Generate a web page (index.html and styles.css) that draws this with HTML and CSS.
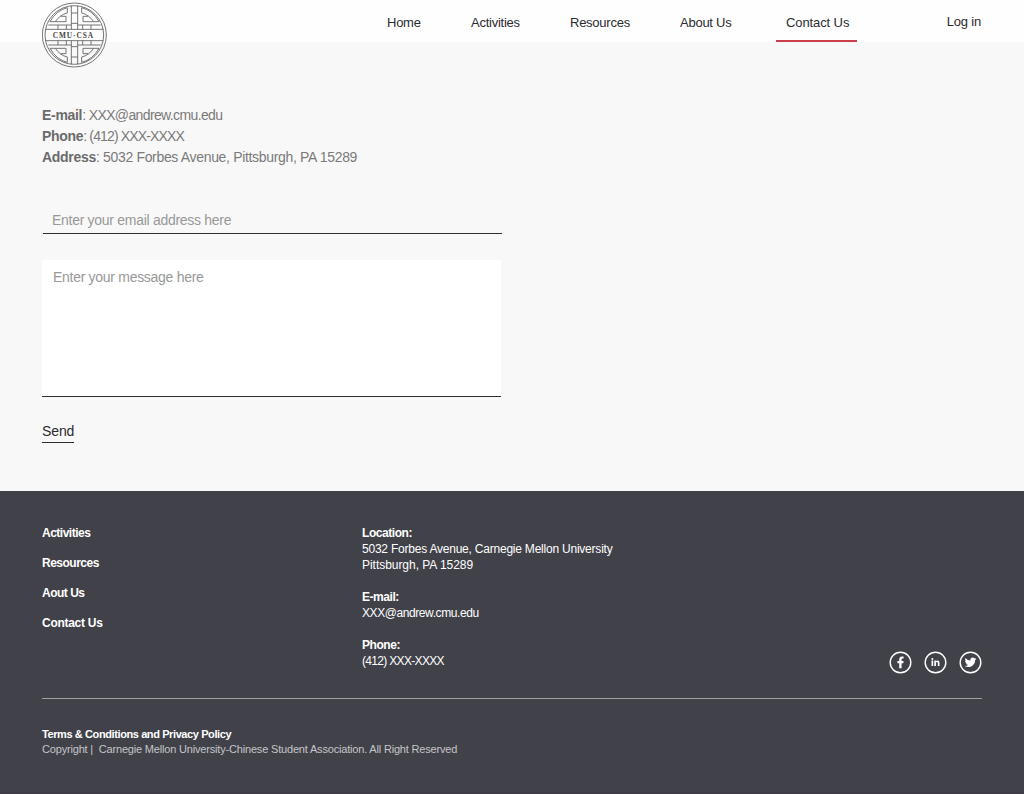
FILE: index.html
```html
<!DOCTYPE html>
<html lang="en">
<head>
<meta charset="utf-8">
<title>CMU-CSA | Contact Us</title>
<link rel="stylesheet" href="styles.css">
</head>
<body>
<header class="header">
  <a class="logo" href="#" aria-label="CMU-CSA">
    <svg width="66" height="66" viewBox="24 6 198 198" fill="none" stroke="#606060" stroke-width="2.6">
      <circle cx="121" cy="105" r="96"/>
      <circle cx="121" cy="105" r="88"/>
      <g id="half">
        <path d="M34 88H208M112 17V88M131 17V88M112 39H131M112 70H131"/>
        <g id="quarter">
          <path d="M43 75H112M72 75V88M97 75V88"/>
          <path d="M100 23V39Q78 44 64 65H96V49H80"/>
          <path d="M100 23Q67 31 48 65H64"/>
        </g>
        <use href="#quarter" transform="matrix(-1 0 0 1 243 0)"/>
      </g>
      <use href="#half" transform="matrix(1 0 0 -1 0 210)"/>
      <text class="logo-text" x="56" y="113" textLength="121" stroke="none">CMU·CSA</text>
    </svg>
  </a>
  <nav class="nav">
    <a class="nav-link home" href="#">Home</a>
    <a class="nav-link activities" href="#">Activities</a>
    <a class="nav-link resources" href="#">Resources</a>
    <a class="nav-link about" href="#">About Us</a>
    <a class="nav-link active" href="#">Contact Us</a>
  </nav>
  <a class="login" href="#">Log in</a>
</header>
<main class="main">
  <address class="details">
    <div class="detail-email"><b>E-mail</b>: XXX@andrew.cmu.edu</div>
    <div class="detail-phone"><b>Phone</b>: (412) XXX-XXXX</div>
    <div><b>Address</b>: 5032 Forbes Avenue, Pittsburgh, PA 15289</div>
  </address>
  <form class="form">
    <input class="email" type="email" placeholder="Enter your email address here">
    <textarea class="message" placeholder="Enter your message here"></textarea>
    <button class="send" type="button">Send</button>
  </form>
</main>
<footer class="footer">
  <div class="footer-top">
    <nav class="footer-nav">
      <a href="#">Activities</a>
      <a href="#">Resources</a>
      <a href="#">Aout Us</a>
      <a class="footer-contact" href="#">Contact Us</a>
    </nav>
    <div class="footer-info">
      <p><b>Location:</b><br>5032 Forbes Avenue, Carnegie Mellon University<br><span class="city">Pittsburgh, PA 15289</span></p>
      <p><b>E-mail:</b><br><span class="mail">XXX@andrew.cmu.edu</span></p>
      <p><b>Phone:</b><br><span class="tel">(412) XXX-XXXX</span></p>
    </div>
    <div class="social">
      <svg width="23" height="23" viewBox="0 0 23 23"><circle cx="11.500" cy="11.500" r="10.300" class="ring"/><path fill="#fff" d="M10.200 17.200V12.300H8.400V9.900H10.200V8.400Q10.200 5.400 13 5.400H14.600V7.600H13.600Q12.600 7.600 12.600 8.600V9.900H14.600L14.300 12.300H12.600V17.200Z"/></svg>
      <svg width="23" height="23" viewBox="0 0 23 23"><circle cx="11.500" cy="11.500" r="10.300" class="ring"/><path fill="#fff" d="M7.500 9.600H9.200V15H7.500ZM10.300 9.600H11.900V10.300Q12.400 9.400 13.600 9.400Q15.500 9.400 15.500 11.800V15H13.800V12.100Q13.800 10.900 12.900 10.900Q12 10.900 12 12.100V15H10.300Z"/><circle cx="8.350" cy="7.900" r="1" fill="#fff"/></svg>
      <svg width="23" height="23" viewBox="0 0 23 23"><circle cx="11.500" cy="11.500" r="10.300" class="ring"/><path fill="#fff" transform="translate(5.600 5.400) scale(.49)" d="M23.950 4.570a10 10 0 0 1-2.820.77 4.960 4.960 0 0 0 2.160-2.720c-.95.560-2 .960-3.130 1.190a4.920 4.920 0 0 0-8.380 4.480C7.690 8.090 4.070 6.130 1.640 3.160a4.920 4.920 0 0 0 1.520 6.570 4.900 4.900 0 0 1-2.230-.61v.06a4.920 4.920 0 0 0 3.950 4.830 5 5 0 0 1-2.210.08 4.940 4.940 0 0 0 4.600 3.420A9.870 9.870 0 0 1 0 19.540a14 14 0 0 0 7.550 2.210c9.050 0 14-7.500 14-13.980 0-.210 0-.420-.02-.630a9.940 9.940 0 0 0 2.420-2.570z"/></svg>
    </div>
  </div>
  <div class="legal">
    <a class="terms" href="#">Terms &amp; Conditions and Privacy Policy</a>
    <span class="copyright">Copyright |&nbsp; Carnegie Mellon University-Chinese Student Association. All Right Reserved</span>
  </div>
</footer>
</body>
</html>
```
FILE: styles.css
```css
* { box-sizing: border-box; }
body {
  margin: 0;
  min-height: 794px;
  background: #f8f8f8;
  color: #2b2b30;
  font-family: "Liberation Sans", Arial, sans-serif;
}
a { color: inherit; text-decoration: none; }
.header {
  display: flex;
  height: 42px;
  padding: 0 42px;
  background: #fefefe;
  font-size: 13px;
  line-height: 16px;
}
.logo { width: 66px; height: 68px; padding-top: 2px; margin-right: 269px; }
.logo svg { display: block; }
.logo-text { font: bold 22px "Liberation Serif", serif; fill: #444; }
.nav { display: flex; }
.nav-link { height: 42px; padding: 15px 10px 0; margin-right: 30px; white-space: nowrap; letter-spacing: -.25px; }
.home { width: 54px; }
.activities { width: 69px; }
.resources { width: 80px; }
.about { width: 75px; margin-right: 31px; }
.active { width: 81px; margin-right: 0; border-bottom: 2px solid #cb3e4b; letter-spacing: -.1px; }
.login { margin-left: auto; padding-top: 14px; margin-right: 1px; letter-spacing: -.2px; white-space: nowrap; }
.main { height: 449px; padding: 63px 42px 0; }
.details {
  font-size: 14px;
  font-style: normal;
  line-height: 21px;
  letter-spacing: -.33px;
  color: #7a7a7a;
}
.details b { color: #6b6b6b; letter-spacing: -.3px; }
.detail-email { letter-spacing: -.63px; }
.detail-phone { letter-spacing: -.86px; }
.form { display: flex; flex-direction: column; align-items: flex-start; padding-top: 38px; }
.email, .message {
  border: 0;
  border-bottom: 1px solid #2f2f32;
  border-radius: 0;
  outline: 0;
  font: 14px/18px "Liberation Sans", Arial, sans-serif;
  letter-spacing: -.29px;
}
.email { width: 459px; height: 28px; margin-left: 1px; padding: 0 9px; background: transparent; }
.message { width: 459px; height: 137px; margin-top: 26px; padding: 8px 11px; background: #fff; resize: none; }
.email::placeholder, .message::placeholder { color: #999; opacity: 1; }
.send {
  height: 20px;
  margin-top: 26px;
  padding: 0 0 3px;
  border: 0;
  border-bottom: 1px solid #2f2f32;
  background: none;
  color: #2b2b30;
  font: 14px/16px "Liberation Sans", Arial, sans-serif;
  letter-spacing: -.1px;
}
.footer {
  height: 303px;
  padding: 34px 42px 0;
  background: #414149;
  border-bottom: 2px solid #403c46;
  color: #fff;
  font-size: 12px;
  line-height: 16px;
}
.footer-top { display: flex; height: 174px; border-bottom: 1px solid #a0a0a4; }
.footer-nav { display: flex; flex-direction: column; gap: 14px; width: 320px; font-weight: bold; letter-spacing: -.5px; }
.footer-contact { letter-spacing: -.28px; }
.footer-info { letter-spacing: -.22px; white-space: nowrap; }
.footer-info p { margin: 0 0 16px; }
.footer-info b { letter-spacing: -.45px; }
.city { letter-spacing: -.04px; }
.mail { letter-spacing: -.42px; }
.tel { letter-spacing: -.68px; }
.social { display: flex; gap: 12px; margin: 126px 0 0 auto; }
.ring { fill: none; stroke: #fff; stroke-width: 1.4; }
.legal { display: flex; flex-direction: column; padding-top: 28px; font-size: 11px; line-height: 15px; white-space: nowrap; }
.terms { font-weight: bold; letter-spacing: -.4px; }
.copyright { color: #c5c5c9; letter-spacing: -.18px; }
```
